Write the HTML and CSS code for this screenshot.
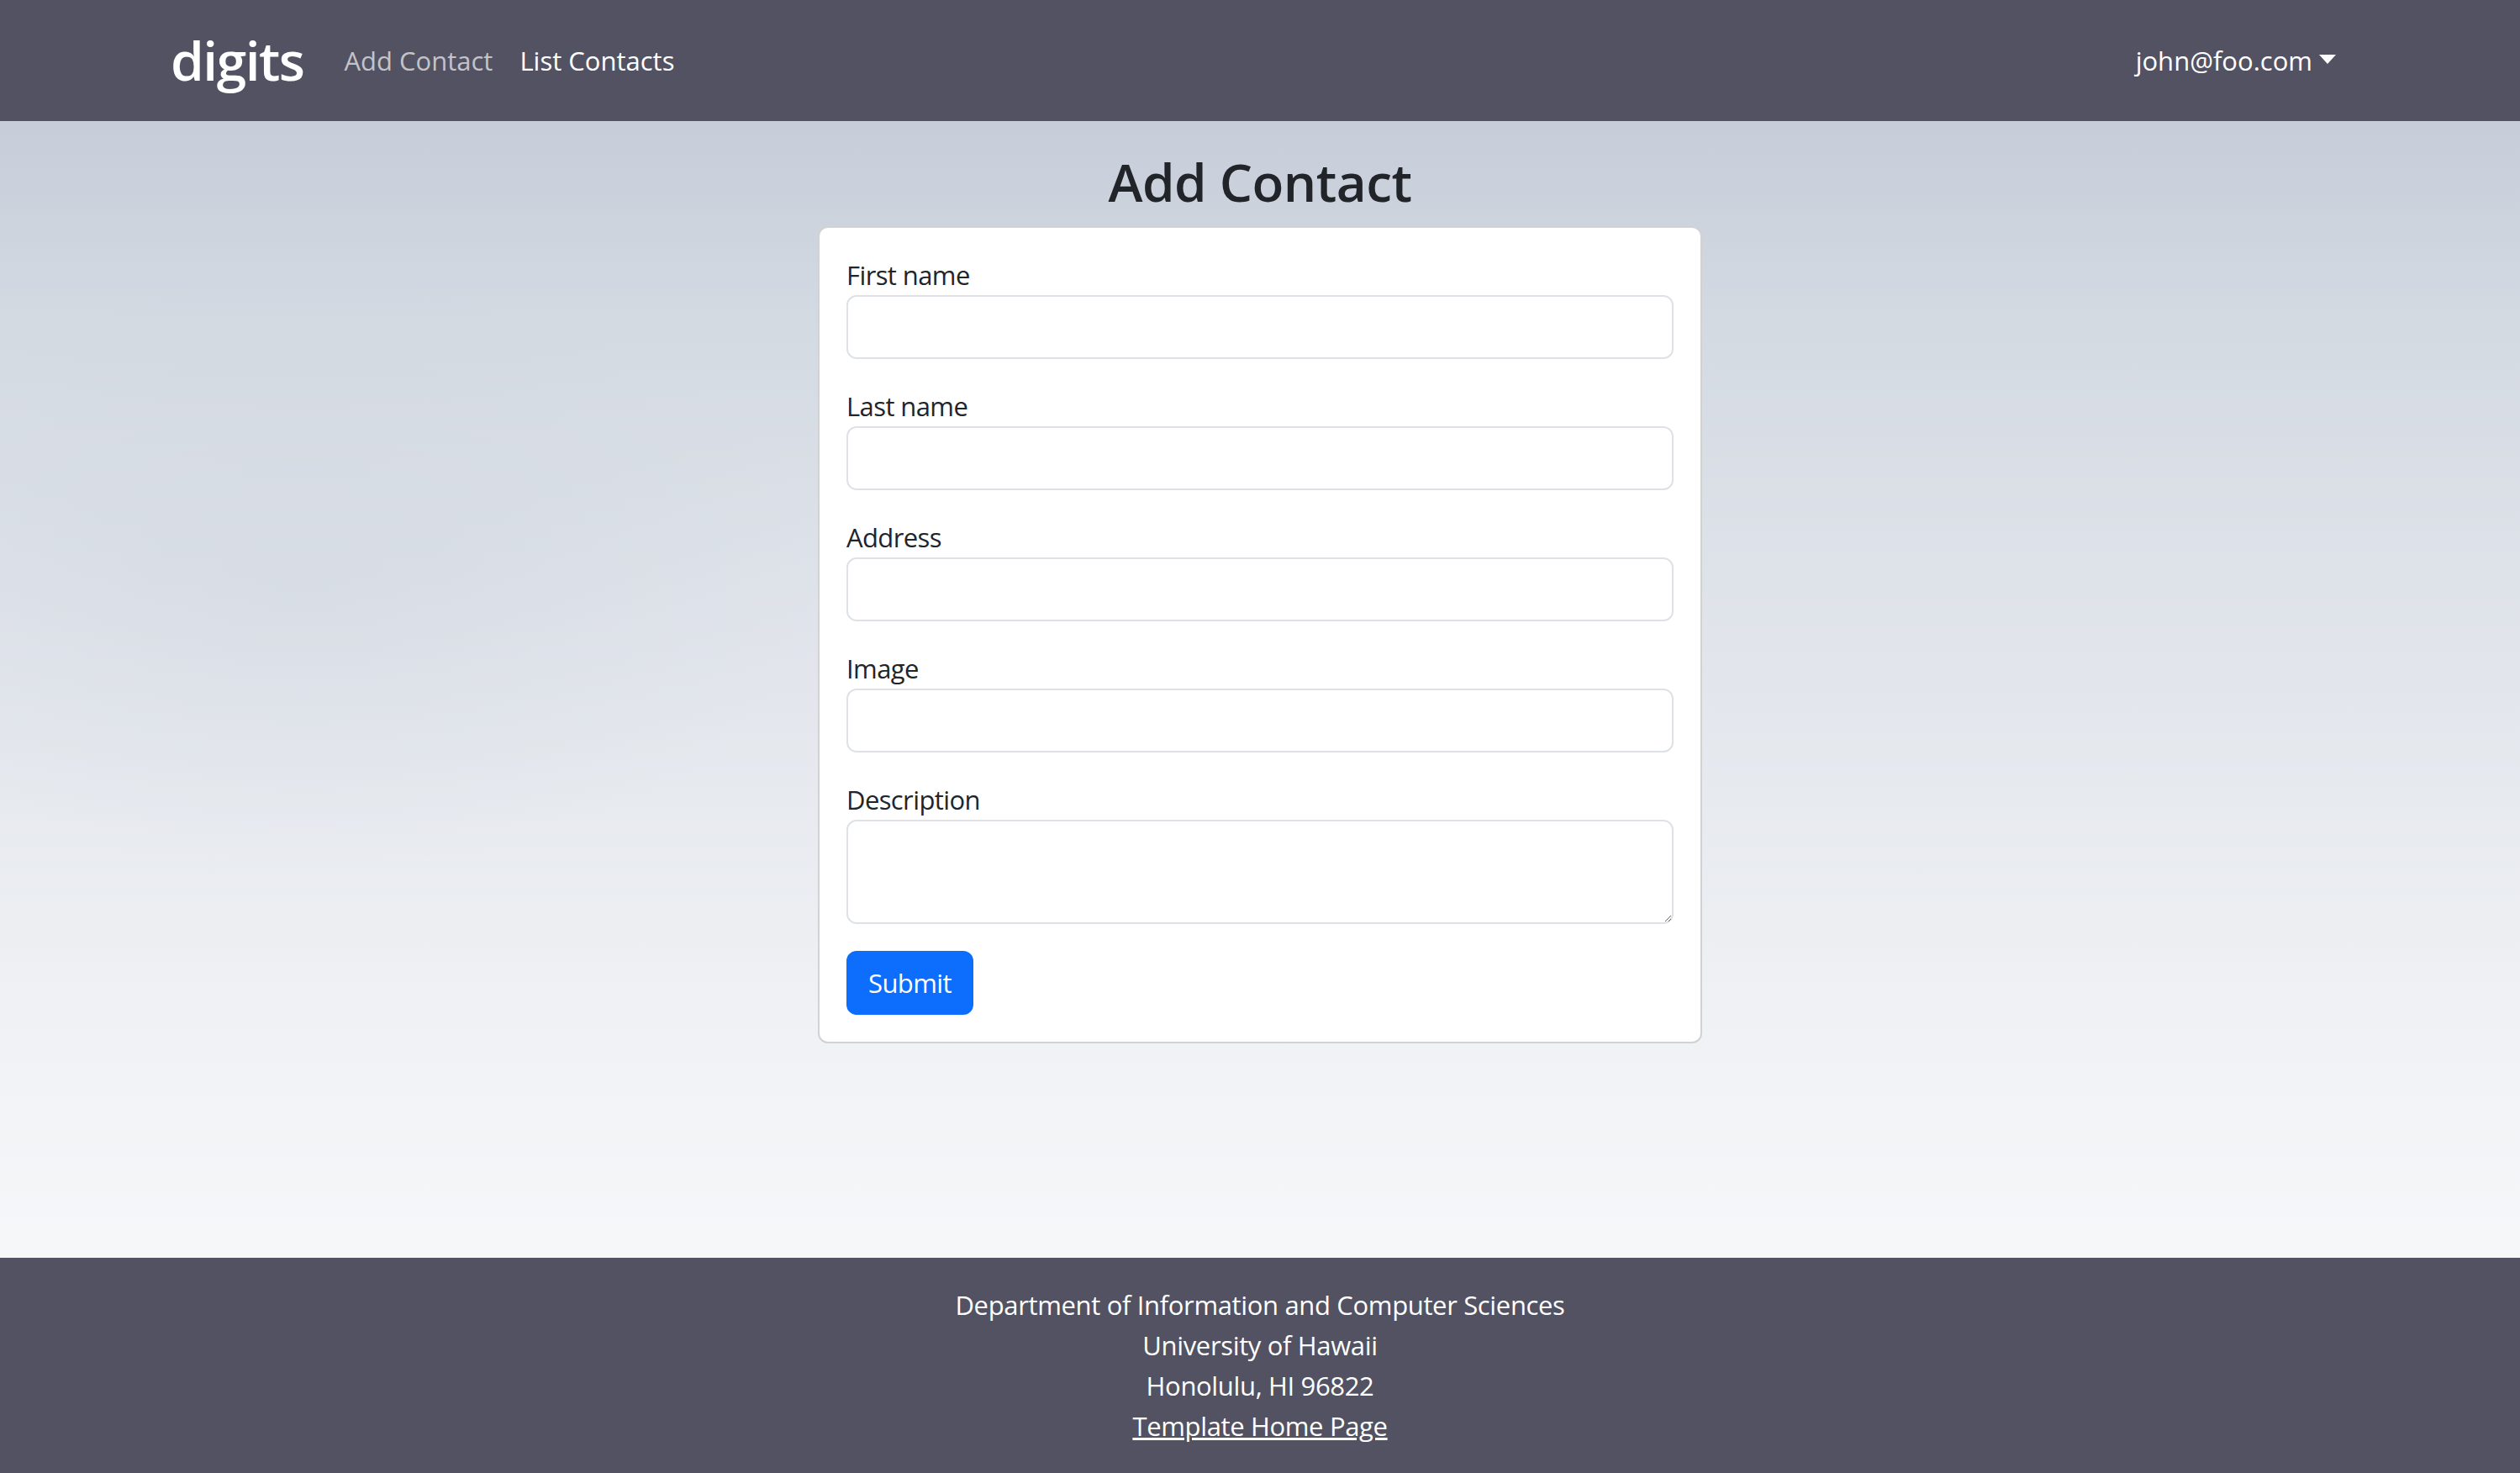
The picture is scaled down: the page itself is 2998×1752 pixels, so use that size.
FILE: index.html
```html
<!DOCTYPE html>
<html lang="en">
<head>
<meta charset="utf-8">
<title>digits - Add Contact</title>
<link rel="stylesheet" href="styles.css">
</head>
<body>
<nav class="navbar">
  <div class="container nav-inner">
    <a class="brand" href="#">digits</a>
    <ul class="nav-list">
      <li><a class="nav-link muted" href="#">Add Contact</a></li>
      <li><a class="nav-link" href="#">List Contacts</a></li>
    </ul>
    <div class="nav-right">
      <a class="nav-link dropdown-toggle" href="#">john@foo.com</a>
    </div>
  </div>
</nav>
<main class="main">
  <div class="container page">
    <h2 class="title">Add Contact</h2>
    <div class="card">
      <form class="card-body">
        <div class="field">
          <label class="label" for="first">First name</label>
          <input class="control" id="first" type="text">
        </div>
        <div class="field">
          <label class="label" for="last">Last name</label>
          <input class="control" id="last" type="text">
        </div>
        <div class="field">
          <label class="label" for="address">Address</label>
          <input class="control" id="address" type="text">
        </div>
        <div class="field">
          <label class="label" for="image">Image</label>
          <input class="control" id="image" type="text">
        </div>
        <div class="field">
          <label class="label" for="desc">Description</label>
          <textarea class="control textarea" id="desc" rows="2"></textarea>
        </div>
        <button class="btn-primary" type="button">Submit</button>
      </form>
    </div>
  </div>
</main>
<footer class="footer">
  <div class="footer-text">
    Department of Information and Computer Sciences<br>
    University of Hawaii<br>
    Honolulu, HI 96822<br>
    <a class="footer-link" href="#">Template Home Page</a>
  </div>
</footer>
</body>
</html>
```
FILE: styles.css
```css
* { box-sizing: border-box; }
html, body { margin: 0; padding: 0; }
body {
  font-family: "Open Sans", "Noto Sans", sans-serif;
  font-size: 32px;
  line-height: 1.5;
  color: #212529;
  min-height: 100vh;
  display: flex;
  flex-direction: column;
  background: #f5f6f8;
}
.container {
  width: 2640px;
  margin: 0 auto;
  padding: 0 24px;
}
.navbar {
  background: #525263;
  height: 144px;
  display: flex;
  align-items: center;
}
.nav-inner {
  display: flex;
  align-items: center;
}
.brand {
  font-size: 64px;
  font-weight: 600;
  line-height: 1.2;
  color: #fff;
  text-decoration: none;
  margin-right: 32px;
  letter-spacing: -1.5px;
}
.nav-list {
  list-style: none;
  margin: 0;
  padding: 0;
  display: flex;
}
.nav-link {
  display: block;
  padding: 0 16px;
  color: #fff;
  text-decoration: none;
  font-size: 31px;
  letter-spacing: 0;
}
.nav-link.muted { color: #c3c3c8; }
.nav-right { margin-left: auto; }
.dropdown-toggle::after {
  content: "";
  display: inline-block;
  margin-left: 8px;
  vertical-align: 8px;
  border-top: 11px solid #fff;
  border-left: 10px solid transparent;
  border-right: 10px solid transparent;
}
.main {
  flex: 1;
  background:
    radial-gradient(ellipse 900px 500px at 12% 40%, rgba(200,208,220,0.3), rgba(200,208,220,0) 70%),
    linear-gradient(180deg, #c7cdd9 0%, #d4dae2 18%, #dee2e9 40%, #e7eaef 60%, #eff1f4 78%, #f6f7f9 100%);
}
.page { padding-top: 34px; }
.title {
  margin: 0 0 14px;
  text-align: center;
  font-size: 62px;
  font-weight: 600;
  line-height: 1.24;
  letter-spacing: -0.5px;
}
.card {
  width: 1052px;
  margin: 0 auto;
  background: #fff;
  border: 2px solid rgba(0,0,0,0.175);
  border-radius: 12px;
}
.card-body {
  padding: 32px;
  display: flex;
  flex-direction: column;
  align-items: flex-start;
}
.field {
  width: 100%;
  margin-bottom: 32px;
}
.label {
  display: block;
  font-size: 31px;
  line-height: 48px;
  letter-spacing: -0.6px;
}
.control {
  display: block;
  width: 100%;
  height: 76px;
  padding: 12px 24px;
  font-family: inherit;
  font-size: 32px;
  line-height: 48px;
  color: #212529;
  background: #fff;
  border: 2px solid #dee2e6;
  border-radius: 12px;
  outline: none;
}
.textarea {
  height: 124px;
  resize: vertical;
}
.btn-primary {
  font-family: inherit;
  font-size: 31px;
  line-height: 48px;
  letter-spacing: -0.6px;
  padding: 12px 24px;
  color: #fff;
  background: #0d6efd;
  border: 2px solid #0d6efd;
  border-radius: 12px;
}
.footer {
  background: #525263;
  color: #fff;
  padding: 32px 0;
  text-align: center;
}
.footer-text {
  font-size: 31px;
  line-height: 48px;
  letter-spacing: -0.35px;
}
.footer-link { color: #fff; }
```
